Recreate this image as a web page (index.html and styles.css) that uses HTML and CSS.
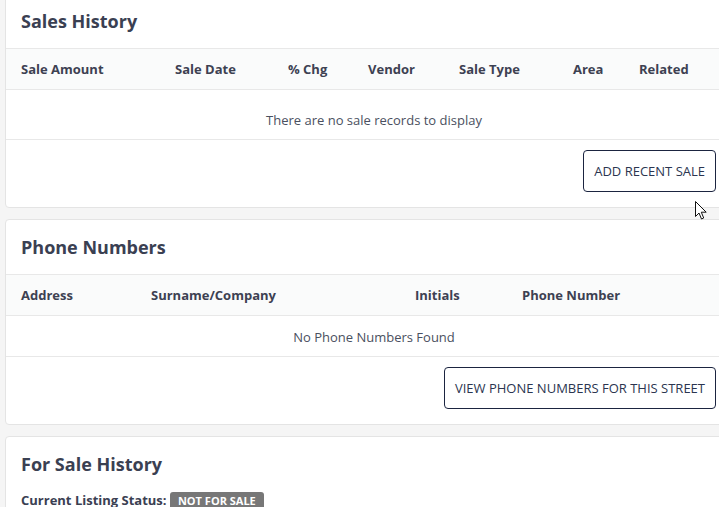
FILE: index.html
```html
<!DOCTYPE html>
<html lang="en">
<head>
    <meta charset="UTF-8">
    <meta name="viewport" content="width=device-width, initial-scale=1.0">
    <title>Property - History</title>
    <link rel="stylesheet" href="styles.css">
</head>
<body>

    <div class="page">
        <div class="card sales-card">
            <h2>Sales History</h2>
            <table class="grid">
                <thead>
                    <tr>
                        <th class="c-amount">Sale Amount</th>
                        <th class="c-date">Sale Date</th>
                        <th class="c-chg">% Chg</th>
                        <th class="c-vendor">Vendor</th>
                        <th class="c-type">Sale Type</th>
                        <th class="c-area">Area</th>
                        <th class="c-related">Related</th>
                    </tr>
                </thead>
                <tbody>
                    <tr><td colspan="7" class="empty tall">There are no sale records to display</td></tr>
                </tbody>
            </table>
            <div class="actions">
                <button class="outline-btn">Add Recent Sale</button>
            </div>
        </div>

        <div class="card">
            <h2>Phone Numbers</h2>
            <table class="grid">
                <thead>
                    <tr>
                        <th class="c-address">Address</th>
                        <th class="c-surname">Surname/Company</th>
                        <th class="c-initials">Initials</th>
                        <th class="c-phone">Phone Number</th>
                    </tr>
                </thead>
                <tbody>
                    <tr><td colspan="4" class="empty">No Phone Numbers Found</td></tr>
                </tbody>
            </table>
            <div class="actions">
                <button class="outline-btn">View Phone Numbers for this Street</button>
            </div>
        </div>

        <div class="card">
            <h2>For Sale History</h2>
            <p class="status">Current Listing Status: <span class="badge">NOT FOR SALE</span></p>
        </div>
    </div>

    <!-- mouse pointer sitting under the first button -->
    <svg class="cursor" width="12" height="19" viewBox="0 0 12 19">
        <path d="M0.5 0.5 L0.5 15.5 L4 12 L6.5 18 L8.7 17 L6.3 11.2 L11.2 11.2 Z" fill="#fff" stroke="#111" stroke-width="1"/>
    </svg>

</body>
</html>
```

FILE: styles.css
```css
body { font-family: "Open Sans", "Liberation Sans", sans-serif; margin: 0; padding: 0; background-color: #f5f5f5; color: #3d4354; overflow: hidden; width: 719px; height: 507px; position: relative; }
.page { width: 738px; margin-left: 5px; margin-top: -7px; }
.card { background-color: #fff; border: 1px solid #e4e4e4; border-radius: 4px; margin-bottom: 11px; }
.card h2 { font-size: 18px; font-weight: 700; color: #3a4052; margin: 0; padding: 15px 15px 0 15px; height: 39px; line-height: 24px; }
.grid { width: 100%; border-collapse: collapse; table-layout: fixed; }
.grid th { box-sizing: border-box; text-align: left; font-size: 13px; font-weight: 700; color: #3d4152; background-color: #fafbfb; padding: 0 0 0 15px; height: 41px; border-top: 1px solid #e8e8e8; border-bottom: 1px solid #e8e8e8; white-space: nowrap; }
.grid td.empty { text-align: center; font-size: 13px; color: #4a5060; padding: 11px 0 10px 0; height: 19px; border-bottom: 1px solid #e8e8e8; }
.grid td.tall { padding: 20px 0 10px 0; }
.c-amount { width: 154px; }
.c-date { width: 113px; }
.c-chg { width: 80px; }
.c-vendor { width: 91px; }
.c-type { width: 114px; }
.c-area { width: 66px; }
.c-related { width: 118px; }
.c-address { width: 130px; }
.c-surname { width: 264px; }
.c-initials { width: 107px; }
.c-phone { width: 235px; }
.actions { display: flex; justify-content: flex-end; padding: 10px 26px 15px 0; }
.outline-btn { font-family: "Open Sans", "Liberation Sans", sans-serif; font-size: 13px; text-transform: uppercase; color: #2b3550; background-color: #fff; border: 1px solid #1b2440; border-radius: 4px; height: 42px; padding: 0 10px; cursor: pointer; }
.status { margin: 0; padding: 0 15px; font-size: 13px; font-weight: 700; color: #3a4052; line-height: 18px; height: 60px; }
.badge { display: inline-block; background-color: #777; color: #fff; font-size: 11px; font-weight: 700; line-height: 15px; padding: 1px 8px 2px 8px; border-radius: 3px; }
.cursor { position: absolute; left: 695px; top: 201px; }
```
